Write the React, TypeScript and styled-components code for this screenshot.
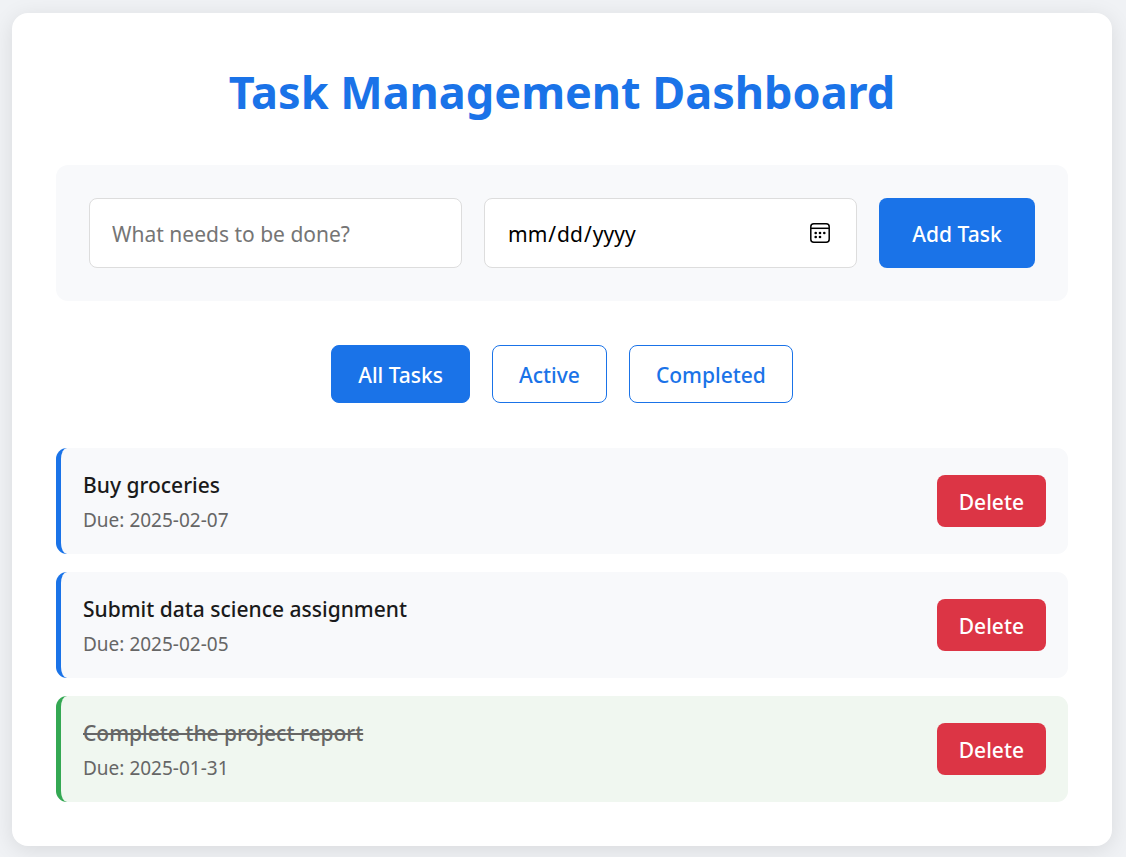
import React, { useState } from 'react';
import styled, { createGlobalStyle } from 'styled-components';

const GlobalStyle = createGlobalStyle`
  *, *::before, *::after { box-sizing: border-box; }
  body {
    margin: 0;
    background: #f0f2f5;
    font-family: "Noto Sans", "Open Sans", sans-serif;
    color: #1a1a1a;
  }
  button, input { font-family: inherit; }
`;

const Page = styled.div`
  padding: 13px 14px 11px 12px;
`;

const Card = styled.main`
  padding: 44px;
  background: #ffffff;
  border-radius: 16px;
  box-shadow: 0 4px 22px rgba(0, 0, 0, 0.1);
`;

const Title = styled.h1`
  margin: 0 0 38px;
  color: #1a73e8;
  font-size: 45px;
  line-height: 70px;
  font-weight: 700;
  text-align: center;
`;

const TaskForm = styled.form`
  display: flex;
  gap: 22px;
  margin-bottom: 44px;
  padding: 33px;
  background: #f8f9fb;
  border-radius: 12px;
`;

const FieldBox = styled.div`
  position: relative;
  flex: 1 1 0;
  min-width: 0;
`;

const Field = styled.input`
  display: block;
  width: 100%;
  height: 70px;
  padding: 2px 22px 0;
  background: #ffffff;
  border: 1px solid #dddddd;
  border-radius: 8px;
  color: #000000;
  font-size: 21px;
  line-height: 32px;
  &::placeholder { color: #757575; opacity: 1; }
  &::-webkit-calendar-picker-indicator { opacity: 0; }
`;

const CalendarIcon = styled.svg`
  position: absolute;
  top: 25px;
  right: 27px;
  pointer-events: none;
`;

const Button = styled.button`
  padding: 2px 0 0;
  border: 1px solid transparent;
  border-radius: 8px;
  font-size: 21px;
  line-height: 30px;
  font-weight: 500;
  cursor: pointer;
`;

const AddButton = styled(Button)`
  width: 156px;
  background: #1a73e8;
  color: #ffffff;
`;

const Filters = styled.nav`
  display: flex;
  justify-content: center;
  gap: 22px;
  margin-bottom: 45px;
`;

const FilterButton = styled(Button)<{ $active: boolean }>`
  height: 58px;
  padding: 2px 26px 0;
  border-color: #1a73e8;
  background: ${p => (p.$active ? '#1a73e8' : '#ffffff')};
  color: ${p => (p.$active ? '#ffffff' : '#1a73e8')};
`;

const TaskList = styled.ul`
  display: flex;
  flex-direction: column;
  gap: 18px;
  margin: 0;
  padding: 0;
  list-style: none;
`;

const TaskRow = styled.li<{ $done: boolean }>`
  display: flex;
  align-items: center;
  justify-content: space-between;
  min-height: 106px;
  padding: 0 22px;
  background: ${p => (p.$done ? '#f0f7f0' : '#f8f9fb')};
  border-left: 5px solid ${p => (p.$done ? '#34a853' : '#1a73e8')};
  border-radius: 11px;
`;

const TaskName = styled.div<{ $done: boolean }>`
  color: ${p => (p.$done ? '#666666' : '#1a1a1a')};
  font-size: 21px;
  line-height: 38px;
  font-weight: 500;
  text-decoration: ${p => (p.$done ? 'line-through' : 'none')};
`;

const DueDate = styled.div`
  color: #666666;
  font-size: 19px;
  line-height: 32px;
`;

const DeleteButton = styled(Button)`
  height: 52px;
  padding: 2px 21px 0;
  background: #dc3545;
  color: #ffffff;
`;

const tasks = [
  { name: 'Buy groceries', due: '2025-02-07', done: false },
  { name: 'Submit data science assignment', due: '2025-02-05', done: false },
  { name: 'Complete the project report', due: '2025-01-31', done: true },
];

const filters = ['All Tasks', 'Active', 'Completed'];

export default function App() {
  const [filter, setFilter] = useState('All Tasks');
  const visible = tasks.filter(t => filter === 'All Tasks' || t.done === (filter === 'Completed'));
  return (
    <Page>
      <GlobalStyle />
      <Card>
        <Title>Task Management Dashboard</Title>
        <TaskForm onSubmit={e => e.preventDefault()}>
          <FieldBox>
            <Field type="text" aria-label="Task" placeholder="What needs to be done?" />
          </FieldBox>
          <FieldBox>
            <Field type="date" aria-label="Due date" />
            <CalendarIcon width="20" height="20" viewBox="0 0 20 20" aria-hidden="true">
              <rect x="0.8" y="0.8" width="18.4" height="18.4" rx="3" fill="none" stroke="#000" strokeWidth="1.5" />
              <path d="M1 5.3h18" stroke="#000" strokeWidth="1.5" />
              <g fill="#000">
                <circle cx="5.7" cy="10" r="1.3" />
                <circle cx="10" cy="10" r="1.3" />
                <circle cx="14.3" cy="10" r="1.3" />
                <circle cx="5.7" cy="14" r="1.3" />
                <circle cx="10" cy="14" r="1.3" />
              </g>
            </CalendarIcon>
          </FieldBox>
          <AddButton type="submit">Add Task</AddButton>
        </TaskForm>
        <Filters>
          {filters.map(f => (
            <FilterButton key={f} type="button" $active={f === filter} onClick={() => setFilter(f)}>{f}</FilterButton>
          ))}
        </Filters>
        <TaskList>
          {visible.map(t => (
            <TaskRow key={t.name} $done={t.done}>
              <div>
                <TaskName $done={t.done}>{t.name}</TaskName>
                <DueDate>Due: {t.due}</DueDate>
              </div>
              <DeleteButton type="button">Delete</DeleteButton>
            </TaskRow>
          ))}
        </TaskList>
      </Card>
    </Page>
  );
}
